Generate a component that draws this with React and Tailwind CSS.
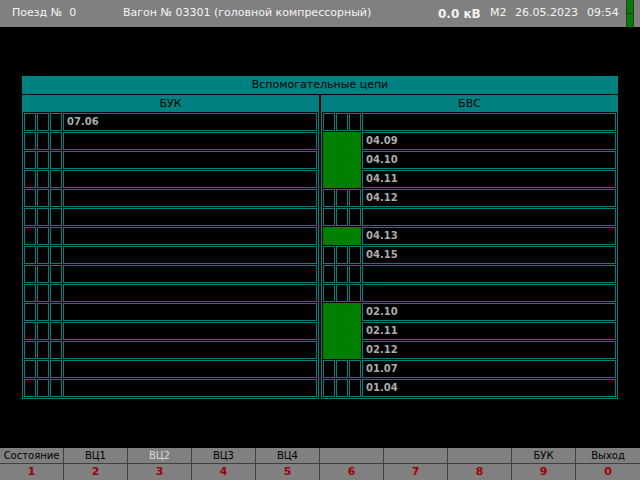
import React from "react";

const leftRows = [
  { t: "07.06" }, {}, {}, {}, {}, {}, {}, {}, {}, {}, {}, {}, {}, {}, {},
];
const rightRows = [
  {},
  { t: "04.09", g: true },
  { t: "04.10", g: true },
  { t: "04.11", g: true },
  { t: "04.12" },
  {},
  { t: "04.13", g: true },
  { t: "04.15" },
  {},
  {},
  { t: "02.10", g: true },
  { t: "02.11", g: true },
  { t: "02.12", g: true },
  { t: "01.07" },
  { t: "01.04" },
];

function Row({ row, next }) {
  return (
    <div className="flex gap-[1px] h-[18px]">
      {row.g ? (
        <div
          className={
            "w-[38px] bg-[#008000] " +
            (next && next.g ? "shadow-[0_1px_0_#008000]" : "")
          }
        />
      ) : (
        <>
          <div className="w-[12px] border border-[#008080]" />
          <div className="w-[12px] border border-[#008080]" />
          <div className="w-[12px] border border-[#008080]" />
        </>
      )}
      <div className="flex-1 border border-[#008080] pl-[3px] text-[10px] leading-[16px] font-bold text-[#acacac]">
        {row.t || ""}
      </div>
    </div>
  );
}

function Panel({ title, rows }) {
  return (
    <div className="w-[297px] flex flex-col">
      <div className="h-[17px] bg-[#008080] text-black text-[11px] leading-[17px] text-center">
        {title}
      </div>
      <div className="border-l border-r border-b border-[#008080] p-[1px] flex flex-col gap-[1px]">
        {rows.map((r, i) => (
          <Row key={i} row={r} next={rows[i + 1]} />
        ))}
      </div>
    </div>
  );
}

const buttons = [
  { l: "Состояние", n: "1" },
  { l: "ВЦ1", n: "2" },
  { l: "ВЦ2", n: "3", dim: true },
  { l: "ВЦ3", n: "4" },
  { l: "ВЦ4", n: "5" },
  { l: "", n: "6" },
  { l: "", n: "7" },
  { l: "", n: "8" },
  { l: "БУК", n: "9" },
  { l: "Выход", n: "0" },
];

export default function App() {
  return (
    <div className="w-[640px] h-[480px] bg-black flex flex-col overflow-hidden font-['DejaVu_Sans',sans-serif]">
      <div className="h-[27px] bg-[#808080] flex items-center text-[11px] text-[#f4f4f4] whitespace-pre">
        <div className="ml-[12px] w-[111px]">Поезд №  0</div>
        <div className="w-[315px]">Вагон № 03301 (головной компрессорный)</div>
        <div className="w-[52px] font-bold text-[12px]">0.0 кВ</div>
        <div className="w-[25px]">M2</div>
        <div className="w-[72px]">26.05.2023</div>
        <div className="w-[39px]">09:54</div>
        <div className="w-[8px] h-[27px] bg-[#303030] px-[1px] flex flex-col gap-[1px]">
          <div className="flex-1 bg-[#008000]" />
          <div className="flex-1 bg-[#008000]" />
        </div>
      </div>
      <div className="flex-1">
        <div className="ml-[22px] mt-[49px] w-[596px] flex flex-col">
          <div className="h-[18px] bg-[#008080] text-black text-[11px] leading-[18px] text-center">
            Вспомогательные цепи
          </div>
          <div className="mt-[1px] flex gap-[2px]">
            <Panel title="БУК" rows={leftRows} />
            <Panel title="БВС" rows={rightRows} />
          </div>
        </div>
      </div>
      <div className="h-[32px] bg-[#808080] grid grid-cols-10">
        {buttons.map((b, i) => (
          <div
            key={i}
            className={
              "flex flex-col " + (i < 9 ? "border-r border-[#404040]" : "")
            }
          >
            <div
              className={
                "h-[16px] border-b border-[#404040] text-[10px] leading-[15px] text-center " +
                (b.dim ? "text-[#d8d8d8]" : "text-black")
              }
            >
              {b.l}
            </div>
            <div className="h-[16px] text-[11px] leading-[16px] font-bold text-center text-[#a00000]">
              {b.n}
            </div>
          </div>
        ))}
      </div>
    </div>
  );
}
